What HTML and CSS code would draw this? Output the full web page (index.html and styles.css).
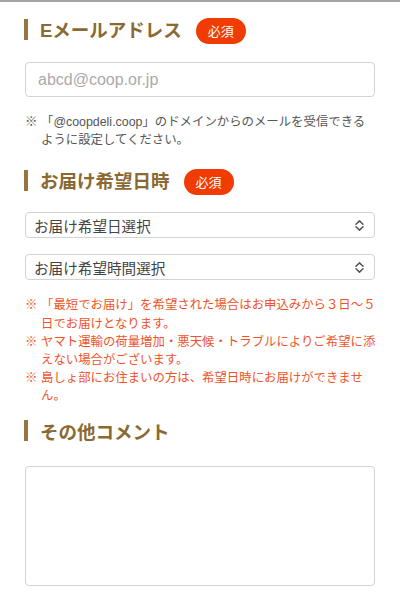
FILE: index.html
```html
<!DOCTYPE html>
<html lang="ja">
<head>
<meta charset="utf-8">
<title>お届け情報</title>
<link rel="stylesheet" href="styles.css">
</head>
<body>
<div class="wrap">
  <h2 class="heading heading-first">Eメールアドレス<span class="badge">必須</span></h2>
  <input class="field" type="email" placeholder="abcd@coop.or.jp">
  <div class="note gray"><span class="mark">※</span><span class="body">「@coopdeli.coop」のドメインからのメールを受信できる<br>ように設定してください。</span></div>

  <h2 class="heading heading-second">お届け希望日時<span class="badge">必須</span></h2>
  <div class="select select-first"><span class="select-text">お届け希望日選択</span>
    <svg class="chev" width="9" height="11" viewBox="0 0 9 11"><path d="M1 4.3 L4.5 0.9 L8 4.3 M1 6.7 L4.5 10.1 L8 6.7" fill="none" stroke="#555" stroke-width="1.5" stroke-linecap="round" stroke-linejoin="round"/></svg>
  </div>
  <div class="select select-second"><span class="select-text">お届け希望時間選択</span>
    <svg class="chev" width="9" height="11" viewBox="0 0 9 11"><path d="M1 4.3 L4.5 0.9 L8 4.3 M1 6.7 L4.5 10.1 L8 6.7" fill="none" stroke="#555" stroke-width="1.5" stroke-linecap="round" stroke-linejoin="round"/></svg>
  </div>
  <div class="notes">
    <div class="note red"><span class="mark">※</span><span class="body">「最短でお届け」を希望された場合はお申込みから３日～５日でお届けとなります。</span></div>
    <div class="note red"><span class="mark">※</span><span class="body">ヤマト運輸の荷量増加・悪天候・トラブルによりご希望に添えない場合がございます。</span></div>
    <div class="note red"><span class="mark">※</span><span class="body">島しょ部にお住まいの方は、希望日時にお届けができません。</span></div>
  </div>

  <h2 class="heading heading-third">その他コメント</h2>
  <textarea class="comment"></textarea>
</div>
</body>
</html>
```
FILE: styles.css
```css
html, body {
  margin: 0;
  padding: 0;
  background: #fff;
}
body {
  font-family: "Liberation Sans", "Noto Sans CJK JP", sans-serif;
}
.wrap {
  border-top: 2px solid #a4a4a4;
  padding: 0 25px;
}
.heading {
  display: flex;
  align-items: center;
  height: 26px;
  margin: 0 0 0 -1px;
  font-size: 18.5px;
  font-weight: bold;
  color: #8a6a32;
  font-family: "Liberation Sans", "Noto Sans CJK JP", sans-serif;
}
.heading::before {
  content: "";
  width: 4px;
  height: 21px;
  background: #98743e;
  margin-right: 12px;
  flex: none;
}
.heading-first { margin-top: 14px; }
.heading-second { margin-top: 18px; }
.heading-third { margin-top: 12px; }
.badge {
  display: inline-flex;
  align-items: center;
  justify-content: center;
  width: 50px;
  height: 26px;
  border-radius: 13px;
  background: #f03c02;
  color: #fff;
  font-size: 13px;
  font-weight: normal;
  margin-left: 14px;
  margin-top: 3px;
  font-family: "Noto Sans CJK JP", sans-serif;
}
.field {
  display: block;
  box-sizing: border-box;
  width: 100%;
  height: 35px;
  margin: 20px 0 0;
  border: 1.5px solid #d3d3d3;
  border-radius: 4px;
  padding: 0 12px;
  font-family: "Liberation Sans", sans-serif;
  font-size: 16px;
  color: #333;
  outline: none;
}
.field::placeholder { color: #aaa; }
.note {
  display: flex;
  font-size: 12.4px;
  line-height: 18.2px;
  margin-right: -5px;
}
.note .mark {
  flex: none;
  width: 16px;
}
.note .body { flex: 1; }
.gray {
  color: #555;
  margin-top: 16px;
}
.red { color: #f0532a; }
.notes { margin-top: 16px; }
.select {
  box-sizing: border-box;
  height: 26px;
  border: 1.5px solid #d3d3d3;
  border-radius: 4px;
  display: flex;
  align-items: center;
  justify-content: space-between;
  padding: 0 10px 0 8px;
}
.select-first { margin-top: 19px; }
.select-second { margin-top: 16px; }
.select-text {
  font-size: 14.6px;
  color: #444;
  font-family: "Noto Sans CJK JP", sans-serif;
}
.chev { display: block; flex: none; }
.comment {
  display: block;
  box-sizing: border-box;
  width: 100%;
  height: 120px;
  margin: 22px 0 0;
  border: 1.5px solid #d3d3d3;
  border-radius: 4px;
  resize: none;
  outline: none;
}
```
